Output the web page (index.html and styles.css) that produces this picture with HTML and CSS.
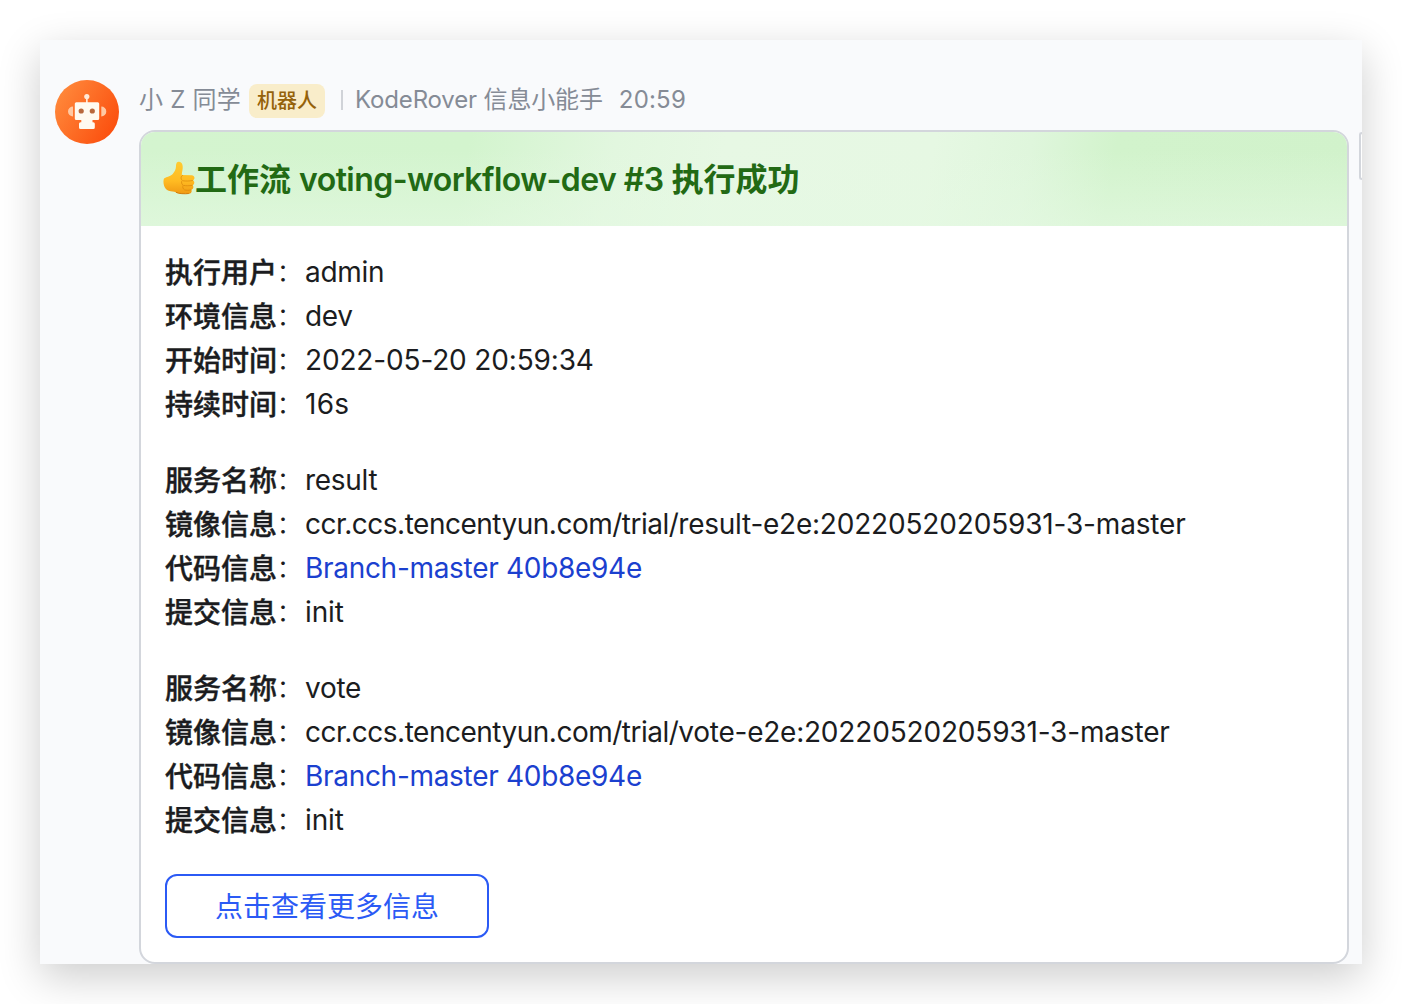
FILE: index.html
```html
<!DOCTYPE html>
<html lang="zh-CN">
<head>
<meta charset="utf-8">
<title>KodeRover 信息小能手</title>
<link rel="stylesheet" href="styles.css">
</head>
<body>
<main class="chat">
  <svg class="avatar" viewBox="0 0 64 64" aria-hidden="true">
    <defs>
      <linearGradient id="orange" x1="0" y1="0.2" x2="1" y2="0.8">
        <stop offset="0" stop-color="#ff8a3c"/>
        <stop offset="1" stop-color="#fb4c0c"/>
      </linearGradient>
    </defs>
    <circle cx="32" cy="32" r="32" fill="url(#orange)"/>
    <path d="M18 26.500v10a5 5 0 0 1 0-10zM46.300 26.500v10a5 5 0 0 0 0-10z" fill="#ffc9a3"/>
    <circle cx="31.800" cy="16.500" r="2.600" fill="#ffe9d6"/>
    <path d="M31 18h1.700v5H31z" fill="#ffe9d6"/>
    <path d="M21.300 22.300h21.400a1.500 1.500 0 0 1 1.500 1.500v14.700a1.500 1.500 0 0 1-1.500 1.500h-5.200v2.200h.8a1.500 1.500 0 0 1 1.500 1.500v3.800a1.500 1.500 0 0 1-1.500 1.500H25.500a1.500 1.500 0 0 1-1.500-1.500v-3.800a1.500 1.500 0 0 1 1.500-1.500h.8V40h-5a1.500 1.500 0 0 1-1.500-1.500V23.800a1.500 1.500 0 0 1 1.500-1.500z" fill="#fffaf0"/>
    <circle cx="26.200" cy="31" r="2.600" fill="#b8683c"/>
    <circle cx="37.300" cy="31" r="2.600" fill="#b8683c"/>
  </svg>
  <section class="message">
    <div class="sender">
      <span class="name">小 Z 同学</span>
      <span class="tag">机器人</span>
      <span class="divider"></span>
      <span class="source">KodeRover 信息小能手</span>
      <time class="time">20:59</time>
    </div>
    <article class="card">
      <header class="card-head">
        <svg class="thumb" viewBox="0 0 34 36" aria-hidden="true">
          <defs>
            <linearGradient id="skin" x1="0" y1="0" x2="0" y2="1">
              <stop offset="0" stop-color="#ffcb32"/>
              <stop offset="0.600" stop-color="#ffbb22"/>
              <stop offset="1" stop-color="#f09a14"/>
            </linearGradient>
          </defs>
          <path d="M2 17.500C5 15.600 8.500 15.500 10.500 13.300c2.200-2.600 3.500-5 3.500-8.300 0-3.200 1.200-4.500 3-4.300 3 .3 4 3.200 3.700 6.600-.2 2.500-.9 4.500-.9 6.600l9.900.4c3.300.2 3.600 4.100 1.300 5 1.900 1.200 1.700 4-.3 4.900 1.300 1.400.8 3.900-1.300 4.500.9 2.100-.4 3.900-2.700 4-4 .3-10 .2-12.500-1.300-2.500-1-4.500-.8-7.500-1.600C2 28.500.5 21 2 17.500z" fill="url(#skin)"/>
          <path d="M30.800 19.500c-3.300.6-7 .7-9.800.3M30.500 24.300c-3.300.6-6.300.6-9 .1M29.200 28.900c-2.400.5-4.500.5-6.800 0M21 14.200c-2 .7-2.700 3.500-.7 5.100-1.300 1.700-.8 4 .9 5-.9 1.700-.3 3.600 1.200 4.500" fill="none" stroke="#dd8a0c" stroke-width="0.800"/>
          <path d="M14 31.300c2.500 1.500 9 1.700 12.800 1.200" fill="none" stroke="#d27d0c" stroke-width="1"/>
        </svg>
        <h1 class="title">工作流 <span class="flow">voting-workflow-dev #3</span> 执行成功</h1>
      </header>
      <div class="card-body">
        <dl class="fields">
          <div class="row"><dt>执行用户</dt><dd>admin</dd></div>
          <div class="row"><dt>环境信息</dt><dd>dev</dd></div>
          <div class="row"><dt>开始时间</dt><dd class="date">2022-05-20 20:59:34</dd></div>
          <div class="row"><dt>持续时间</dt><dd class="duration">16s</dd></div>
        </dl>
        <dl class="fields">
          <div class="row"><dt>服务名称</dt><dd>result</dd></div>
          <div class="row"><dt>镜像信息</dt><dd><span class="registry">ccr.ccs.tencentyun.com/trial/</span><span class="image">result-e2e:</span><span class="version">20220520205931-3-master</span></dd></div>
          <div class="row"><dt>代码信息</dt><dd><a class="link">Branch-master 40b8e94e</a></dd></div>
          <div class="row"><dt>提交信息</dt><dd class="commit">init</dd></div>
        </dl>
        <dl class="fields">
          <div class="row"><dt>服务名称</dt><dd>vote</dd></div>
          <div class="row"><dt>镜像信息</dt><dd><span class="registry">ccr.ccs.tencentyun.com/trial/</span><span class="image">vote-e2e:</span><span class="version">20220520205931-3-master</span></dd></div>
          <div class="row"><dt>代码信息</dt><dd><a class="link">Branch-master 40b8e94e</a></dd></div>
          <div class="row"><dt>提交信息</dt><dd class="commit">init</dd></div>
        </dl>
        <button class="more" type="button">点击查看更多信息</button>
      </div>
    </article>
  </section>
  <span class="edge"></span>
</main>
</body>
</html>
```
FILE: styles.css
```css
* { box-sizing: border-box; }

body {
  margin: 0;
  padding: 40px;
  height: 1004px;
  overflow: hidden;
  background: #fff;
  color: #1b1c20;
  font-family: Inter, "Noto Sans CJK SC", sans-serif;
  font-size: 28px;
}

.chat {
  position: relative;
  display: flex;
  gap: 20px;
  width: 1322px;
  height: 924px;
  padding: 40px 13px 0 15px;
  background: #f9fafc;
  box-shadow: 0 13px 40px rgba(0, 0, 0, 0.2);
}

.avatar { flex: none; width: 64px; height: 64px; }

.message { flex: 1; min-width: 0; }

.sender {
  display: flex;
  align-items: center;
  height: 50px;
  padding-bottom: 10px;
  color: #858b96;
  font-size: 24px;
  line-height: 40px;
  white-space: nowrap;
}

.name { width: 110px; letter-spacing: 0.25px; }

.tag {
  width: 76px;
  height: 34px;
  margin-top: 2px;
  border-radius: 8px;
  background: #f9edca;
  color: #95620a;
  font-size: 20px;
  font-weight: 500;
  line-height: 35px;
  text-align: center;
}

.divider { width: 2px; height: 20px; margin: 0 12px 0 16px; background: #d0d3d8; }
.source { letter-spacing: -0.15px; }
.time { margin-left: 16px; letter-spacing: 0.2px; }

.card {
  height: 834px;
  border: 2px solid #d3d6dc;
  border-radius: 16px;
  overflow: hidden;
  background: #fff;
}

.card-head {
  display: flex;
  align-items: center;
  height: 94px;
  padding-left: 21px;
  background:
    linear-gradient(to bottom, rgba(229, 249, 227, 0) 20%, rgba(229, 249, 227, 0.6)),
    linear-gradient(100deg, #d4f4cf 0%, #d3f4ce 27%, #e2f7df 39%, #e7f8e4 48%, #e6f8e3 65%, #dff6dc 73%, #d2f3cc 80%, #d1f2cb 100%);
}

.thumb { width: 34px; height: 36px; margin-right: -1px; }

.title {
  margin: 0;
  padding-top: 1px;
  color: #226a14;
  font-size: 32px;
  font-weight: 600;
  line-height: 48px;
  white-space: nowrap;
}

.flow { letter-spacing: -0.56px; }

.card-body { padding: 25px 24px 23px; }

.fields { margin: 0 0 32px; }
.row { display: flex; height: 44px; line-height: 44px; white-space: nowrap; }
dt { width: 140px; font-weight: 500; -webkit-text-stroke: 0.4px; }
dt::after {
  content: "：";
  font-size: 24px;
  font-weight: 400;
  line-height: 1;
  vertical-align: 2px;
  -webkit-text-stroke: 0;
}
dd { margin: 0; letter-spacing: -0.3px; line-height: 42px; }
.registry { letter-spacing: -0.5px; }
.image { letter-spacing: -0.25px; }
.version { letter-spacing: -0.17px; }
.date { letter-spacing: -0.15px; }
.duration { letter-spacing: 0.3px; }
.commit { letter-spacing: -0.1px; }
.link { color: #1b40cf; }

.more {
  display: block;
  width: 324px;
  height: 64px;
  margin-top: -1px;
  padding: 2px 0 0;
  border: 2px solid #2b5af5;
  border-radius: 12px;
  background: #fff;
  color: #2b5af5;
  font: inherit;
  line-height: 58px;
}

/* Neighbouring control cut off by the panel's right edge */
.edge {
  position: absolute;
  top: 92px;
  right: 0;
  width: 3px;
  height: 48px;
  border: 2px solid #d3d6dc;
  border-right: 0;
  border-radius: 5px 0 0 5px;
  background: #fff;
}
```
